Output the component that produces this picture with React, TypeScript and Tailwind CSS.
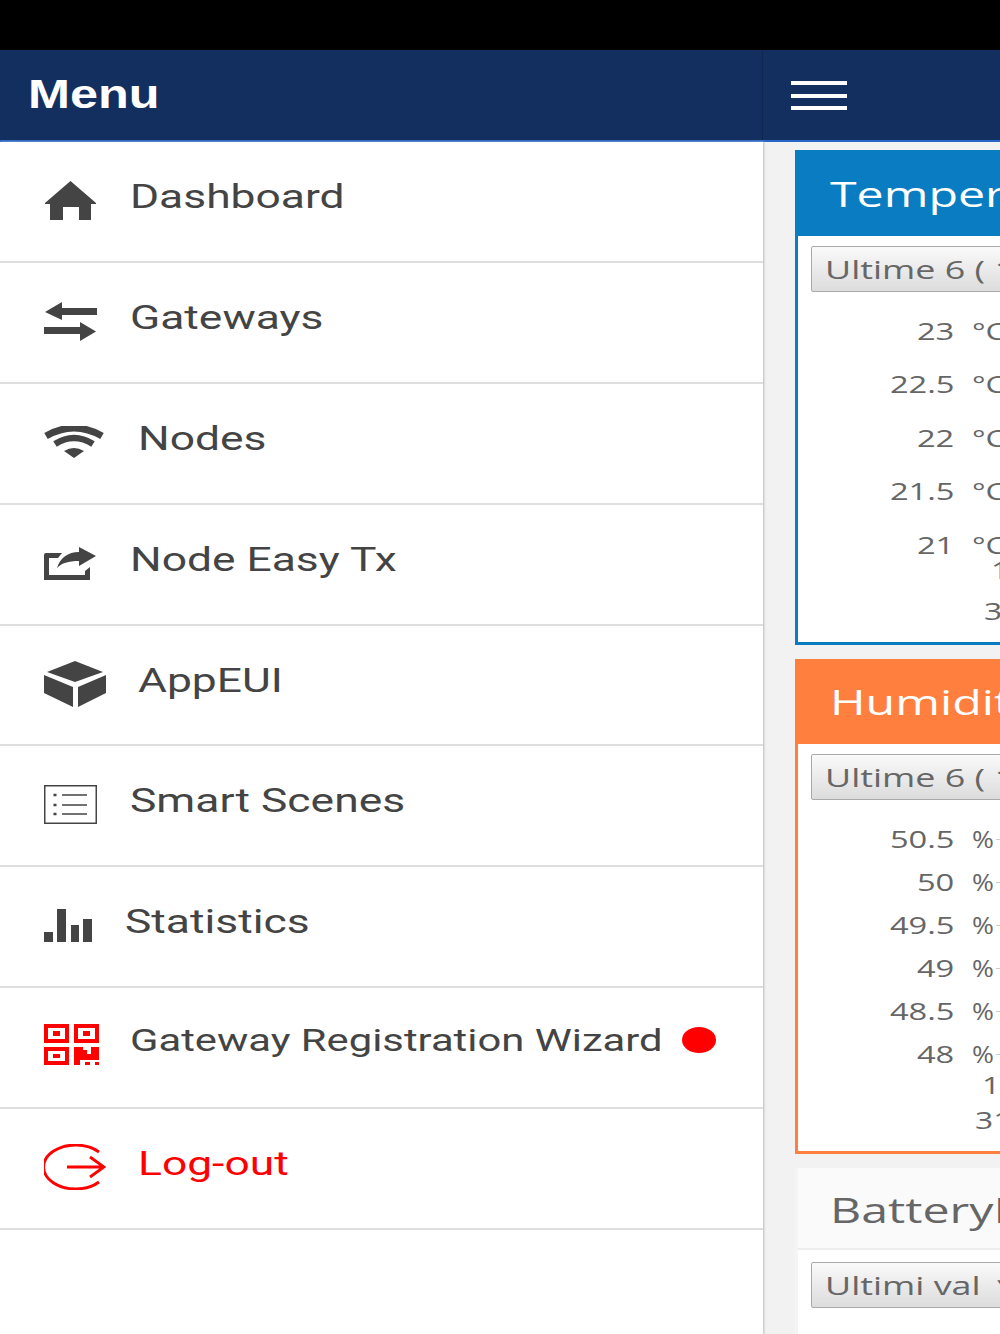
import type { ReactNode } from "react";

const HomeIcon = () => (
  <svg className="ml-px" width="51" height="39" viewBox="0 0 51 39" fill="#444">
    <path d="M25.5 0 L51 22 V23 H46 V39 H34 V26 H18 V39 H5 V23 H0 V22 Z" />
  </svg>
);

const TransferIcon = () => (
  <svg width="53" height="39" viewBox="0 0 53 39" fill="#444">
    <path d="M1 10 L18 0 V6 H53 V13 H18 V18 Z" />
    <path d="M52 29.5 L36 39 V32 H0 V25 H36 V20 Z" />
  </svg>
);

const WifiIcon = () => (
  <svg width="60" height="32" viewBox="0 0 60 32" fill="none" stroke="#444">
    <path d="M2 10 Q30 -6 58 10" strokeWidth="7" />
    <path d="M11 18 Q30 6 49 18" strokeWidth="6.5" />
    <path d="M20 25 Q30 19 40 25 L30 32 Z" fill="#444" stroke="none" />
  </svg>
);

const ShareIcon = () => (
  <svg width="52" height="33" viewBox="0 0 52 33" fill="#444">
    <path d="M18 6 H2 Q0 6 0 8 V33 H46 V20 L41 24 V28 H5 V11 H14 Z" />
    <path d="M35 0 L52 9 L35 19 V14 C24 14 18 16 13 21 C16 11 24 5 35 5 Z" />
  </svg>
);

const CubeIcon = () => (
  <svg width="62" height="46" viewBox="0 0 62 46" fill="#444">
    <path d="M31 0 L59 11 L31 21 L3 11 Z" />
    <path d="M0 14 L29 26 V46 L0 32 Z" />
    <path d="M62 14 L34 26 V46 L62 32 Z" />
  </svg>
);

const ListIcon = () => (
  <svg width="53" height="39" viewBox="0 0 53 39" fill="none" stroke="#444">
    <rect x="0.75" y="0.75" width="51.5" height="37.5" strokeWidth="1.5" />
    <path d="M18 10 H43 M18 20 H43 M18 29 H43" strokeWidth="1.3" />
    <path d="M9.5 10 H12.5 M9.5 20 H12.5 M9.5 29 H12.5" strokeWidth="2.5" />
  </svg>
);

const BarsIcon = () => (
  <svg width="49" height="33" viewBox="0 0 49 33" fill="#444">
    <rect x="0" y="23" width="9" height="10" />
    <rect x="13" y="0" width="9" height="33" />
    <rect x="27" y="16" width="8" height="17" />
    <rect x="39" y="10" width="9" height="23" />
  </svg>
);

const QrIcon = () => (
  <svg width="56" height="41" viewBox="0 0 56 41" fill="red">
    <path fillRule="evenodd" d="M0 0 H25 V19 H0 Z M4 4 V15 H21 V4 Z M9 7 H16 V12 H9 Z" />
    <path fillRule="evenodd" d="M30 0 H55 V19 H30 Z M34 4 V15 H51 V4 Z M39 7 H46 V12 H39 Z" />
    <path fillRule="evenodd" d="M0 23 H25 V41 H0 Z M4 27 V37 H21 V27 Z M9 30 H16 V34 H9 Z" />
    <path d="M30 23 H39 V26 H43 V30 H47 V23 H55 V36 H36 V41 H30 Z" />
    <rect x="41" y="38" width="5" height="3" />
    <rect x="51" y="38" width="4" height="3" />
  </svg>
);

const LogoutIcon = () => (
  <svg width="62" height="46" viewBox="0 0 62 46" fill="none" stroke="red" strokeWidth="2.8">
    <path d="M55 8 A 32 22 0 1 0 55 38" />
    <path d="M23 23 H60 M46 13 L60 23 L46 33" />
  </svg>
);

const menuItems: { label: string; icon: ReactNode; iconBox: string; labelClass?: string; red?: boolean; dot?: boolean }[] = [
  { label: "Dashboard", icon: <HomeIcon />, iconBox: "pt-[39px] w-[86px]" },
  { label: "Gateways", icon: <TransferIcon />, iconBox: "pt-[39px] w-[86px]" },
  { label: "Nodes", icon: <WifiIcon />, iconBox: "pt-[42px] w-[94px]" },
  { label: "Node Easy Tx", icon: <ShareIcon />, iconBox: "pt-[42px] w-[86px]" },
  { label: "AppEUI", icon: <CubeIcon />, iconBox: "pt-[35px] w-[94px]" },
  { label: "Smart Scenes", icon: <ListIcon />, iconBox: "pt-[38.5px] w-[86px]" },
  { label: "Statistics", icon: <BarsIcon />, iconBox: "pt-[41.5px] w-[81px]" },
  {
    label: "Gateway Registration Wizard",
    icon: <QrIcon />,
    iconBox: "pt-[36px] w-[86px]",
    labelClass: "mt-[32px] text-[32px]",
    dot: true,
  },
  { label: "Log-out", icon: <LogoutIcon />, iconBox: "pt-[35px] w-[94px]", red: true },
];

function MenuRow({ item }: { item: (typeof menuItems)[number] }) {
  return (
    <div className="relative flex h-[120.9px] items-start border-b-2 border-[#dedede] pl-[44px]">
      <div className={`shrink-0 ${item.iconBox}`}>{item.icon}</div>
      <span
        className={`inline-block origin-left scale-x-[1.305] whitespace-nowrap font-['Roboto',sans-serif] leading-[40px] ${
          item.labelClass ?? "mt-[34px] text-[34px]"
        } ${item.red ? "text-[#ff0000]" : "text-[#444444]"}`}
      >
        {item.label}
      </span>
      {item.dot && <span className="absolute left-[682px] top-[39px] h-[26px] w-[34px] rounded-[50%] bg-[#ff0000]" />}
    </div>
  );
}

function SelectBox({ text }: { text: string }) {
  return (
    <div className="mx-[13px] h-[46px] overflow-hidden whitespace-nowrap rounded-[2px] border border-[#a9a9a9] bg-gradient-to-b from-[#fafafa] to-[#dcdcdc] pl-[13px]">
      <span className="inline-block origin-left scale-x-[1.38] font-['Open_Sans',sans-serif] text-[26px] leading-[44px] text-[#666666]">
        {text}
      </span>
    </div>
  );
}

function ValueRow({ value, unit, rowClass }: { value: string; unit: string; rowClass: string }) {
  return (
    <div className={`flex items-center font-['Open_Sans',sans-serif] text-[23px] text-[#666666] ${rowClass}`}>
      <div className="flex w-[156px] justify-end">
        <span className="origin-right scale-x-[1.42]">{value}</span>
      </div>
      <span className={`ml-[18px] origin-left whitespace-nowrap ${unit === "%" ? "scale-x-[1.15]" : "scale-x-[1.38]"}`}>
        {unit}
      </span>
      <div className="ml-[5px] h-px w-[20px] bg-[#cccccc]" />
    </div>
  );
}

function AxisLabel({ text, className }: { text: string; className: string }) {
  return (
    <div className={`h-[28px] font-['Open_Sans',sans-serif] text-[23px] leading-[28px] text-[#666666] ${className}`}>
      <span className="inline-block origin-left scale-x-[1.38]">{text}</span>
    </div>
  );
}

function CardTitle({ text, className }: { text: string; className: string }) {
  return (
    <div className={`flex items-center font-['Open_Sans',sans-serif] text-[35px] ${className}`}>
      <span className="origin-left scale-x-[1.38] whitespace-nowrap">{text}</span>
    </div>
  );
}

export default function App() {
  return (
    <div className="flex h-[1334px] w-[1000px] flex-col overflow-hidden bg-[#f2f2f2]">
      <div className="h-[50px] shrink-0 bg-black" />
      <div className="flex h-[92px] shrink-0 border-b-2 border-[#2a66c9] bg-[#132f60]">
        <div className="flex w-[763px] items-center border-r border-[#0f2750] pb-[2px] pl-[28px]">
          <span className="origin-left scale-x-[1.26] font-['Liberation_Sans',sans-serif] text-[40px] font-bold leading-none text-white">
            Menu
          </span>
        </div>
        <div className="flex flex-col gap-[8.5px] pl-[28px] pt-[31px]">
          <div className="h-[4px] w-[56px] bg-white" />
          <div className="h-[4px] w-[56px] bg-white" />
          <div className="h-[4px] w-[56px] bg-white" />
        </div>
      </div>
      <div className="flex min-h-0 flex-1">
        <div className="w-[763px] shrink-0 bg-white shadow-[1px_0_2px_#bbbbbb]">
          {menuItems.map((item) => (
            <MenuRow key={item.label} item={item} />
          ))}
        </div>
        <div className="flex w-[420px] shrink-0 flex-col pl-[32px] pt-[8px]">
          <div className="h-[495px] shrink-0 border-[3px] border-t-0 border-[#0a7dc2] bg-white">
            <CardTitle text="Temperature" className="-mx-[3px] h-[86px] bg-[#0a7dc2] pl-[35px] pt-[2px] text-white" />
            <div className="h-[10px]" />
            <SelectBox text="Ultime 6 ( 1" />
            <div className="h-[12px]" />
            <ValueRow value="23" unit="°C" rowClass="h-[53.6px]" />
            <ValueRow value="22.5" unit="°C" rowClass="h-[53.6px]" />
            <ValueRow value="22" unit="°C" rowClass="h-[53.6px]" />
            <ValueRow value="21.5" unit="°C" rowClass="h-[53.6px]" />
            <ValueRow value="21" unit="°C" rowClass="h-[53.6px]" />
            <AxisLabel text="1" className="-mt-[16px] ml-[193px]" />
            <AxisLabel text="3" className="ml-[186px] mt-[13px]" />
          </div>
          <div className="mt-[14px] h-[495px] shrink-0 border-[3px] border-t-0 border-[#ff7f3f] bg-white">
            <CardTitle text="Humidity" className="-mx-[3px] h-[85px] bg-[#ff7f3f] pl-[35px] pt-[2px] text-white" />
            <div className="h-[10px]" />
            <SelectBox text="Ultime 6 ( 1" />
            <div className="h-[18px]" />
            <ValueRow value="50.5" unit="%" rowClass="h-[43px]" />
            <ValueRow value="50" unit="%" rowClass="h-[43px]" />
            <ValueRow value="49.5" unit="%" rowClass="h-[43px]" />
            <ValueRow value="49" unit="%" rowClass="h-[43px]" />
            <ValueRow value="48.5" unit="%" rowClass="h-[43px]" />
            <ValueRow value="48" unit="%" rowClass="h-[43px]" />
            <AxisLabel text="1" className="-mt-[5px] ml-[184px]" />
            <AxisLabel text="31" className="ml-[177px] mt-[7px]" />
          </div>
          <div className="mt-[14px] h-[300px] shrink-0 border-[3px] border-t-0 border-[#f5f5f5] bg-white">
            <CardTitle text="BatteryLevel" className="h-[82px] border-b-2 border-[#eeeeee] bg-[#fafafa] pl-[32px] pt-[5px] text-[#666666]" />
            <div className="h-[12px]" />
            <SelectBox text="Ultimi val ▼" />
          </div>
        </div>
      </div>
    </div>
  );
}
